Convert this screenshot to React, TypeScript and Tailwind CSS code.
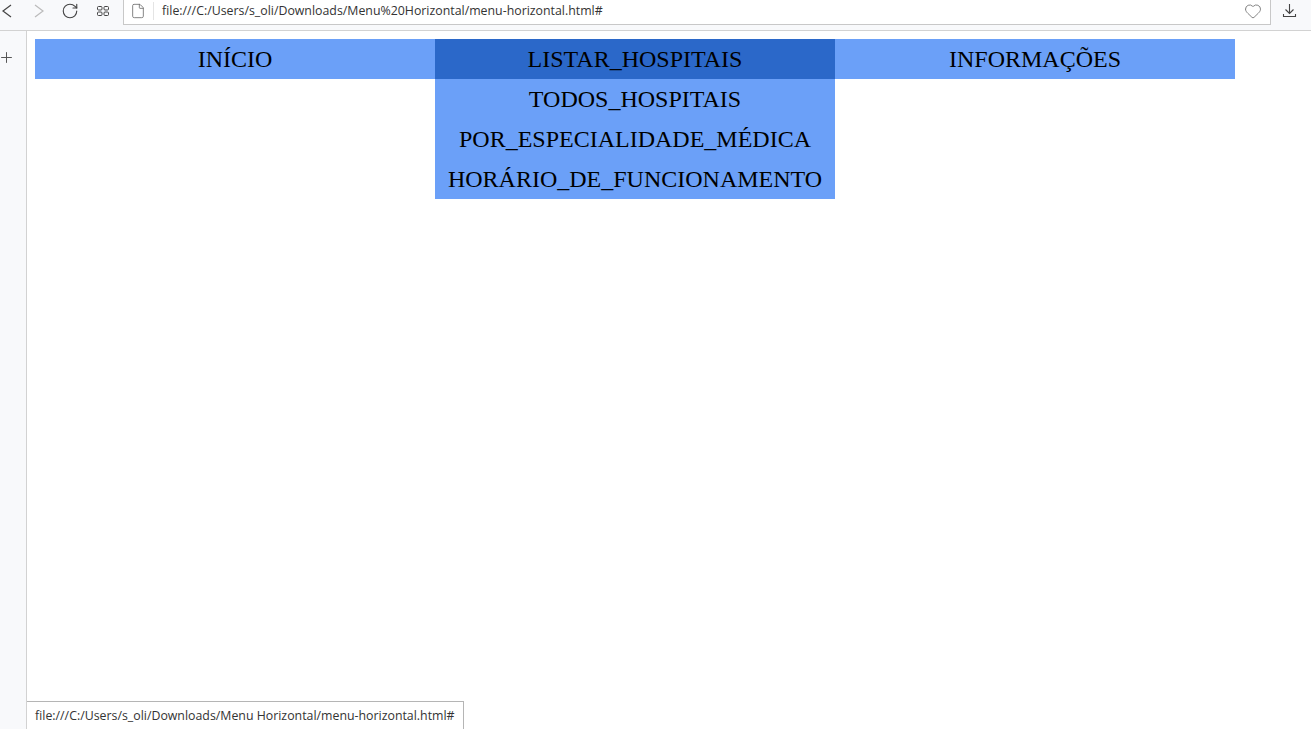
import React from 'react';
import { RotateCw, File, Heart, Plus } from 'lucide-react';

const submenu = ['TODOS_HOSPITAIS', 'POR_ESPECIALIDADE_MÉDICA', 'HORÁRIO_DE_FUNCIONAMENTO'];

const MenuLink: React.FC<{ label: string; active?: boolean }> = ({ label, active }) => (
  <a
    href="#"
    className={
      active
        ? 'block h-10 leading-10 text-center bg-[#2b68c9] text-black'
        : 'block h-10 leading-10 text-center text-black'
    }
  >
    {label}
  </a>
);

const App: React.FC = () => {
  return (
    <div className="h-[729px] w-[1311px] overflow-hidden bg-white flex flex-col relative font-['Open_Sans','Noto_Sans',sans-serif]">
      {/* browser toolbar */}
      <div className="h-[31px] shrink-0 flex bg-[#f8f9fb] border-b border-[#d2d2d2]">
        <div className="w-[123px] h-[22px] shrink-0 flex items-center">
          <svg width="14" height="14" viewBox="0 0 14 14" fill="none" stroke="#444" strokeWidth="1.2" className="shrink-0">
            <path d="M11 1 3 7l8 6" />
          </svg>
          <svg width="14" height="14" viewBox="0 0 14 14" fill="none" stroke="#bbb" strokeWidth="1.2" className="shrink-0 ml-[18px]">
            <path d="M3 1l8 6-8 6" />
          </svg>
          <RotateCw size={18} strokeWidth={1.5} className="text-[#444] shrink-0 ml-[15px]" />
          <svg width="14" height="12" viewBox="0 0 14 12" fill="none" stroke="#444" strokeWidth="1" className="shrink-0 ml-[17px]">
            <rect x="1.5" y="1.5" width="4.5" height="3.5" rx="1" />
            <rect x="8" y="1.5" width="4.5" height="3.5" rx="1" />
            <rect x="1.5" y="7" width="4.5" height="3.5" rx="1" />
            <rect x="8" y="7" width="4.5" height="3.5" rx="1" />
          </svg>
        </div>
        <div className="w-[1148px] h-[25px] bg-white border-l border-r border-b border-[#c8c8c8] flex items-center pb-[2px]">
          <File size={16} strokeWidth={1.2} className="text-[#666] shrink-0 ml-[6px]" />
          <div className="w-px h-[18px] bg-[#e4e4e4] ml-[7px]"></div>
          <span className="ml-[8px] text-[12.35px] text-[#333]">file:///C:/Users/s_oli/Downloads/Menu%20Horizontal/menu-horizontal.html#</span>
          <Heart size={18} strokeWidth={1.2} className="text-[#777] ml-auto mr-[8px]" />
        </div>
        <div className="flex-1 flex justify-end pr-[14px] pt-[3px]">
          <svg width="15" height="15" viewBox="0 0 15 15" fill="none" stroke="#444" strokeWidth="1.1">
            <path d="M7.5 1v9.5M3.5 6.5l4 4 4-4M1.5 11v2.5h12V11" />
          </svg>
        </div>
      </div>

      <div className="flex-1 flex min-h-0">
        {/* side panel */}
        <div className="w-[27px] shrink-0 bg-[#f8f9fb] border-r border-[#d2d2d2] pt-[18px]">
          <Plus size={17} strokeWidth={1.4} className="text-[#555] ml-[-2px]" />
        </div>

        {/* page */}
        <div className="flex-1 pt-[8px] pl-[8px] font-['Liberation_Serif',serif] text-[24px]">
          <nav className="flex w-[1200px] items-start">
            <div className="w-[400px] bg-[#6ba0f8]">
              <MenuLink label="INÍCIO" />
            </div>
            <div className="w-[400px] bg-[#6ba0f8]">
              <MenuLink label="LISTAR_HOSPITAIS" active />
              {submenu.map((item) => (
                <MenuLink key={item} label={item} />
              ))}
            </div>
            <div className="w-[400px] bg-[#6ba0f8]">
              <MenuLink label="INFORMAÇÕES" />
            </div>
          </nav>
        </div>
      </div>

      {/* status bubble */}
      <div className="absolute left-[27px] bottom-0 h-[28px] w-[437px] bg-white border-t border-r border-[#b5b5b5] pl-[8px] leading-[27px] text-[12.35px] text-[#333]">
        file:///C:/Users/s_oli/Downloads/Menu Horizontal/menu-horizontal.html#
      </div>
    </div>
  );
};

export default App;
